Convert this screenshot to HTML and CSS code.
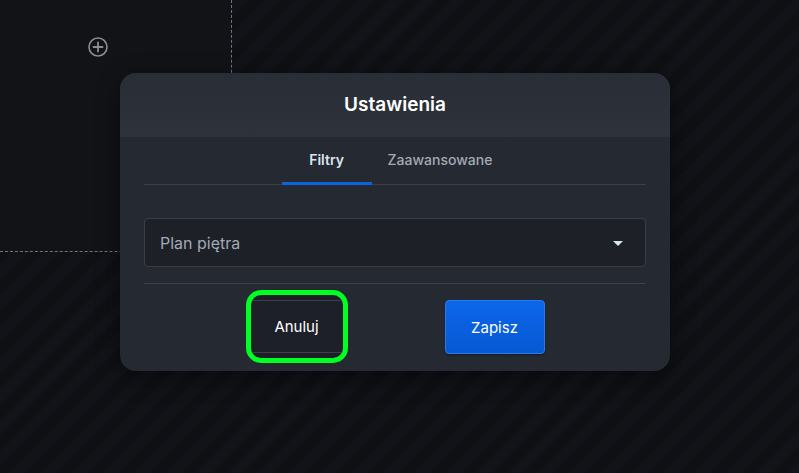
FILE: index.html
```html
<!DOCTYPE html>
<html lang="pl">
<head>
<meta charset="utf-8">
<title>Ustawienia</title>
<link rel="stylesheet" href="styles.css">
</head>
<body>
<div class="page">
  <div class="canvas-cell">
    <svg class="add-icon" width="22" height="22" viewBox="0 0 22 22" aria-hidden="true">
      <circle cx="11" cy="11" r="9" fill="none" stroke="#8a8d93" stroke-width="1.6"/>
      <path d="M11 6.5v9M6.5 11h9" stroke="#8a8d93" stroke-width="1.8" stroke-linecap="round"/>
    </svg>
  </div>

  <div class="dialog" role="dialog">
    <div class="dialog-header">Ustawienia</div>
    <div class="dialog-body">
      <div class="tabs">
        <div class="tab active">Filtry</div>
        <div class="tab">Zaawansowane</div>
      </div>
      <div class="select">
        <span class="placeholder">Plan piętra</span>
        <span class="caret"></span>
      </div>
      <div class="divider"></div>
      <div class="footer">
        <span class="focus-ring"><button class="btn btn-cancel">Anuluj</button></span>
        <button class="btn btn-save">Zapisz</button>
      </div>
    </div>
  </div>
</div>
</body>
</html>
```

FILE: styles.css
```css
* { box-sizing: border-box; }
html, body { margin: 0; height: 100%; }
body {
  font-family: Inter, "Noto Sans", "Liberation Sans", sans-serif;
  background: #0d0f13;
  overflow: hidden;
}
.page {
  position: relative;
  width: 799px;
  height: 473px;
  background:
    repeating-linear-gradient(135deg, #0e1014 0px, #0e1014 11px, #111318 11px, #111318 22px);
}
.canvas-cell {
  width: 232px;
  height: 252px;
  background: #111317;
  border-right: 1px dashed #6f737a;
  border-bottom: 1px dashed #6f737a;
  padding: 36px 0 0 87px;
}
.add-icon { display: block; }

.dialog {
  position: absolute;
  left: 120px;
  top: 73px;
  width: 550px;
  height: 298px;
  border-radius: 16px;
  background: #252931;
  overflow: hidden;
  box-shadow: 0 6px 24px rgba(0,0,0,0.45);
}
.dialog-header {
  height: 64px;
  background: linear-gradient(#292d35, #2d323b);
  color: #ffffff;
  font-size: 19px;
  font-weight: 600;
  display: flex;
  align-items: center;
  justify-content: center;
  padding-bottom: 1px;
}
.dialog-body {
  padding: 0 24px;
}
.tabs {
  height: 48px;
  display: flex;
  justify-content: center;
  border-bottom: 1px solid #3b4048;
}
.tab {
  min-width: 90px;
  padding: 0 16px;
  display: flex;
  align-items: center;
  justify-content: center;
  font-size: 14px;
  font-weight: 500;
  color: #a3aab5;
  margin-bottom: -1px;
  border-bottom: 3px solid transparent;
}
.tab.active {
  color: #d9e4f2;
  font-weight: 600;
  border-bottom-color: #0b63de;
}
.select {
  margin-top: 33px;
  height: 49px;
  border: 1px solid #3a3e46;
  border-radius: 4px;
  background: #1d2027;
  display: flex;
  align-items: center;
  justify-content: space-between;
  padding: 0 22px 0 15px;
}
.placeholder {
  color: #a1a9b5;
  font-size: 16px;
}
.caret {
  width: 0;
  height: 0;
  border-left: 5px solid transparent;
  border-right: 5px solid transparent;
  border-top: 5px solid #d8e6f2;
  margin-top: 2px;
}
.divider {
  margin-top: 16px;
  height: 1px;
  background: #3d424a;
}
.footer {
  display: flex;
  justify-content: center;
  align-items: center;
  gap: 97px;
  padding-top: 6px;
}
.btn {
  font-family: inherit;
  font-size: 15px;
  font-weight: 400;
  color: #ffffff;
  cursor: pointer;
}
.focus-ring {
  display: flex;
  border: 5px solid #00ff22;
  border-radius: 15px;
  background: #1c1f27;
  padding: 5px 1px;
}
.btn-cancel {
  width: 90px;
  height: 53px;
  background: #1d2028;
  border: none;
  border-top: 1px solid #3c4048;
  border-bottom: 1px solid #3c4048;
}
.btn-save {
  width: 100px;
  height: 54px;
  border-radius: 4px;
  border: 1px solid #2a7af0;
  background: linear-gradient(#0b67ea, #0758d3);
  box-shadow: 0 1px 2px rgba(0,0,0,0.4);
  margin-top: 1px;
}
```
